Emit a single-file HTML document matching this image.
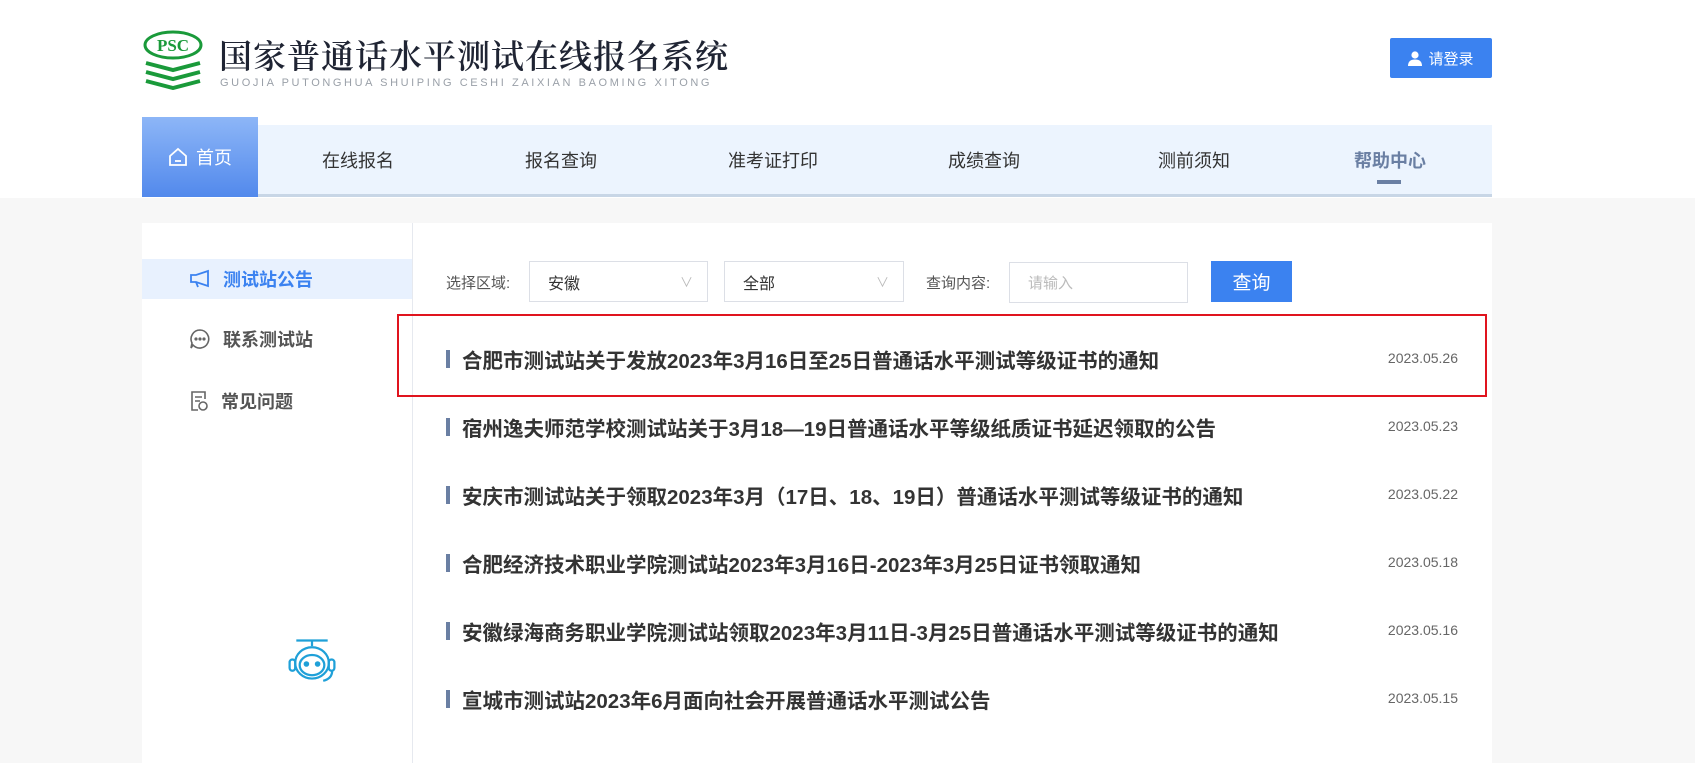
<!DOCTYPE html>
<html><head><meta charset="utf-8"><style>
*{margin:0;padding:0;box-sizing:border-box}
body{width:1695px;height:748px;overflow:hidden;background:#f7f7f7;font-family:"Liberation Sans","Noto Sans CJK SC",sans-serif;position:relative}
.top{position:absolute;left:0;top:0;width:1695px;height:198px;background:#fff}
.abs{position:absolute}
.nav{left:142px;top:125px;width:1350px;height:72px;background:#ecf4fe;border-bottom:3px solid #c8d6e6}
.home{left:142px;top:117px;width:116px;height:80px;background:linear-gradient(#8db6f7,#5289ec);color:#fff;font-size:18px;display:flex;align-items:center;justify-content:center;gap:8px}
.ni{top:147px;font-size:18px;color:#333;transform:translateX(-50%);white-space:nowrap}
.card{left:142px;top:223px;width:1350px;height:540px;background:#fff}
.side{left:142px;top:223px;width:271px;height:540px;border-right:1px solid #e6e9ef}
.si{left:142px;width:270px;height:40px;display:flex;align-items:center;padding-left:47px;gap:12px;font-size:18px;font-weight:bold;color:#555}
.box{height:41px;border:1px solid #dcdfe6;background:#fff;font-size:16px;color:#333;display:flex;align-items:center;padding-left:18px}
.lbl{font-size:15px;color:#555;top:272px}
.li{left:446px;height:26px;display:flex;align-items:center;font-size:20.5px;font-weight:bold;color:#333}
.li:before{content:"";width:4px;height:18px;background:#6a7fa3;margin-right:12px}
.dt{font-size:14px;color:#666;right:237px}
</style></head><body>
<div class="top"></div>
<svg class="abs" style="left:142px;top:30px" width="62" height="60" viewBox="0 0 62 60">
<ellipse cx="31" cy="15" rx="28" ry="13" fill="none" stroke="#1a9a3a" stroke-width="3"/>
<text x="31" y="21" text-anchor="middle" font-family="Liberation Serif" font-weight="bold" font-size="17" fill="#1a9a3a">PSC</text>
<g stroke="#1a9a3a" stroke-width="4" fill="none"><path d="M4 33 L31 40 L58 33"/><path d="M4 42 L31 49 L58 42"/><path d="M4 51 L31 58 L58 51"/></g>
</svg>
<div class="abs" style="left:219px;top:31px;font-size:33px;color:#1f2433;font-family:'Noto Serif CJK SC',serif;font-weight:600;letter-spacing:1px">国家普通话水平测试在线报名系统</div>
<div class="abs" style="left:220px;top:77px;font-size:11px;color:#9aa0a8;letter-spacing:2.6px">GUOJIA PUTONGHUA SHUIPING CESHI ZAIXIAN BAOMING XITONG</div>
<div class="abs" style="left:1390px;top:38px;width:102px;height:40px;background:#3b82f0;color:#fff;font-size:15px;display:flex;align-items:center;justify-content:center;gap:6px;border-radius:2px">
<svg width="14" height="15" viewBox="0 0 14 15"><circle cx="7" cy="4" r="3.6" fill="#fff"/><path d="M0 15 Q0 8.5 7 8.5 Q14 8.5 14 15Z" fill="#fff"/></svg>请登录</div>
<div class="abs nav"></div>
<div class="abs home"><svg width="20" height="20" viewBox="0 0 20 20" fill="none" stroke="#fff" stroke-width="1.8"><path d="M2 9 L10 2 L18 9 V18 H2Z"/><path d="M7 14 H13"/></svg>首页</div>
<div class="abs ni" style="left:358px">在线报名</div>
<div class="abs ni" style="left:561px">报名查询</div>
<div class="abs ni" style="left:773px">准考证打印</div>
<div class="abs ni" style="left:984px">成绩查询</div>
<div class="abs ni" style="left:1194px">测前须知</div>
<div class="abs ni" style="left:1390px;font-weight:bold;color:#6a7fa3">帮助中心</div>
<div class="abs" style="left:1377px;top:180px;width:24px;height:4px;background:#6a7fa3"></div>
<div class="abs card"></div>
<div class="abs side"></div>
<div class="abs si" style="top:259px;background:#e8f1fe;color:#3b82f0"><svg width="22" height="20" viewBox="0 0 22 20" fill="none" stroke="#3b82f0" stroke-width="1.8"><path d="M19 2 L7 6 H2 V13 H7 L19 17Z"/><path d="M7 13 L9 18"/></svg>测试站公告</div>
<div class="abs si" style="top:319px"><svg width="22" height="22" viewBox="0 0 22 22" fill="none" stroke="#666" stroke-width="1.6"><path d="M11 2 A9 9 0 1 1 4 17 L2 20 L3 15 A9 9 0 0 1 11 2Z"/><circle cx="7" cy="11" r=".8" fill="#666"/><circle cx="11" cy="11" r=".8" fill="#666"/><circle cx="15" cy="11" r=".8" fill="#666"/></svg>联系测试站</div>
<div class="abs si" style="top:381px"><svg width="20" height="22" viewBox="0 0 20 22" fill="none" stroke="#666" stroke-width="1.6"><path d="M16 9 V2 H3 V20 H9"/><path d="M6 7 H13 M6 11 H11"/><circle cx="14" cy="16" r="4"/></svg>常见问题</div>
<svg class="abs" style="left:282px;top:636px" width="60" height="56" viewBox="0 0 52 50" fill="none" stroke="#1fa0d8" stroke-width="2"><path d="M12 4 H40 M26 4 V9"/><ellipse cx="26" cy="24" rx="15" ry="14"/><ellipse cx="26" cy="26" rx="11" ry="9"/><rect x="6" y="21" width="5" height="10" rx="2.5"/><rect x="41" y="21" width="5" height="10" rx="2.5"/><path d="M44 31 Q44 38 36 40"/><circle cx="21" cy="25" r="1.5" fill="#1fa0d8"/><circle cx="31" cy="25" r="1.5" fill="#1fa0d8"/></svg>
<div class="abs lbl" style="left:446px">选择区域:</div>
<div class="abs box" style="left:529px;top:261px;width:179px">安徽<span style="position:absolute;right:14px;color:#bbb;font-size:13px">&#8744;</span></div>
<div class="abs box" style="left:724px;top:261px;width:180px">全部<span style="position:absolute;right:14px;color:#bbb;font-size:13px">&#8744;</span></div>
<div class="abs lbl" style="left:926px">查询内容:</div>
<div class="abs box" style="left:1009px;top:262px;width:179px;color:#bbb;font-size:15px">请输入</div>
<div class="abs" style="left:1211px;top:261px;width:81px;height:41px;background:#3b82f0;color:#fff;font-size:19px;display:flex;align-items:center;justify-content:center">查询</div>
<div class="abs" style="left:397px;top:314px;width:1090px;height:83px;border:2px solid #e0141e"></div>
<div class="abs li" style="top:346px">合肥市测试站关于发放2023年3月16日至25日普通话水平测试等级证书的通知</div><div class="abs dt" style="top:350px">2023.05.26</div>
<div class="abs li" style="top:414px">宿州逸夫师范学校测试站关于3月18—19日普通话水平等级纸质证书延迟领取的公告</div><div class="abs dt" style="top:418px">2023.05.23</div>
<div class="abs li" style="top:482px">安庆市测试站关于领取2023年3月（17日、18、19日）普通话水平测试等级证书的通知</div><div class="abs dt" style="top:486px">2023.05.22</div>
<div class="abs li" style="top:550px">合肥经济技术职业学院测试站2023年3月16日-2023年3月25日证书领取通知</div><div class="abs dt" style="top:554px">2023.05.18</div>
<div class="abs li" style="top:618px">安徽绿海商务职业学院测试站领取2023年3月11日-3月25日普通话水平测试等级证书的通知</div><div class="abs dt" style="top:622px">2023.05.16</div>
<div class="abs li" style="top:686px">宣城市测试站2023年6月面向社会开展普通话水平测试公告</div><div class="abs dt" style="top:690px">2023.05.15</div>
</body></html>
